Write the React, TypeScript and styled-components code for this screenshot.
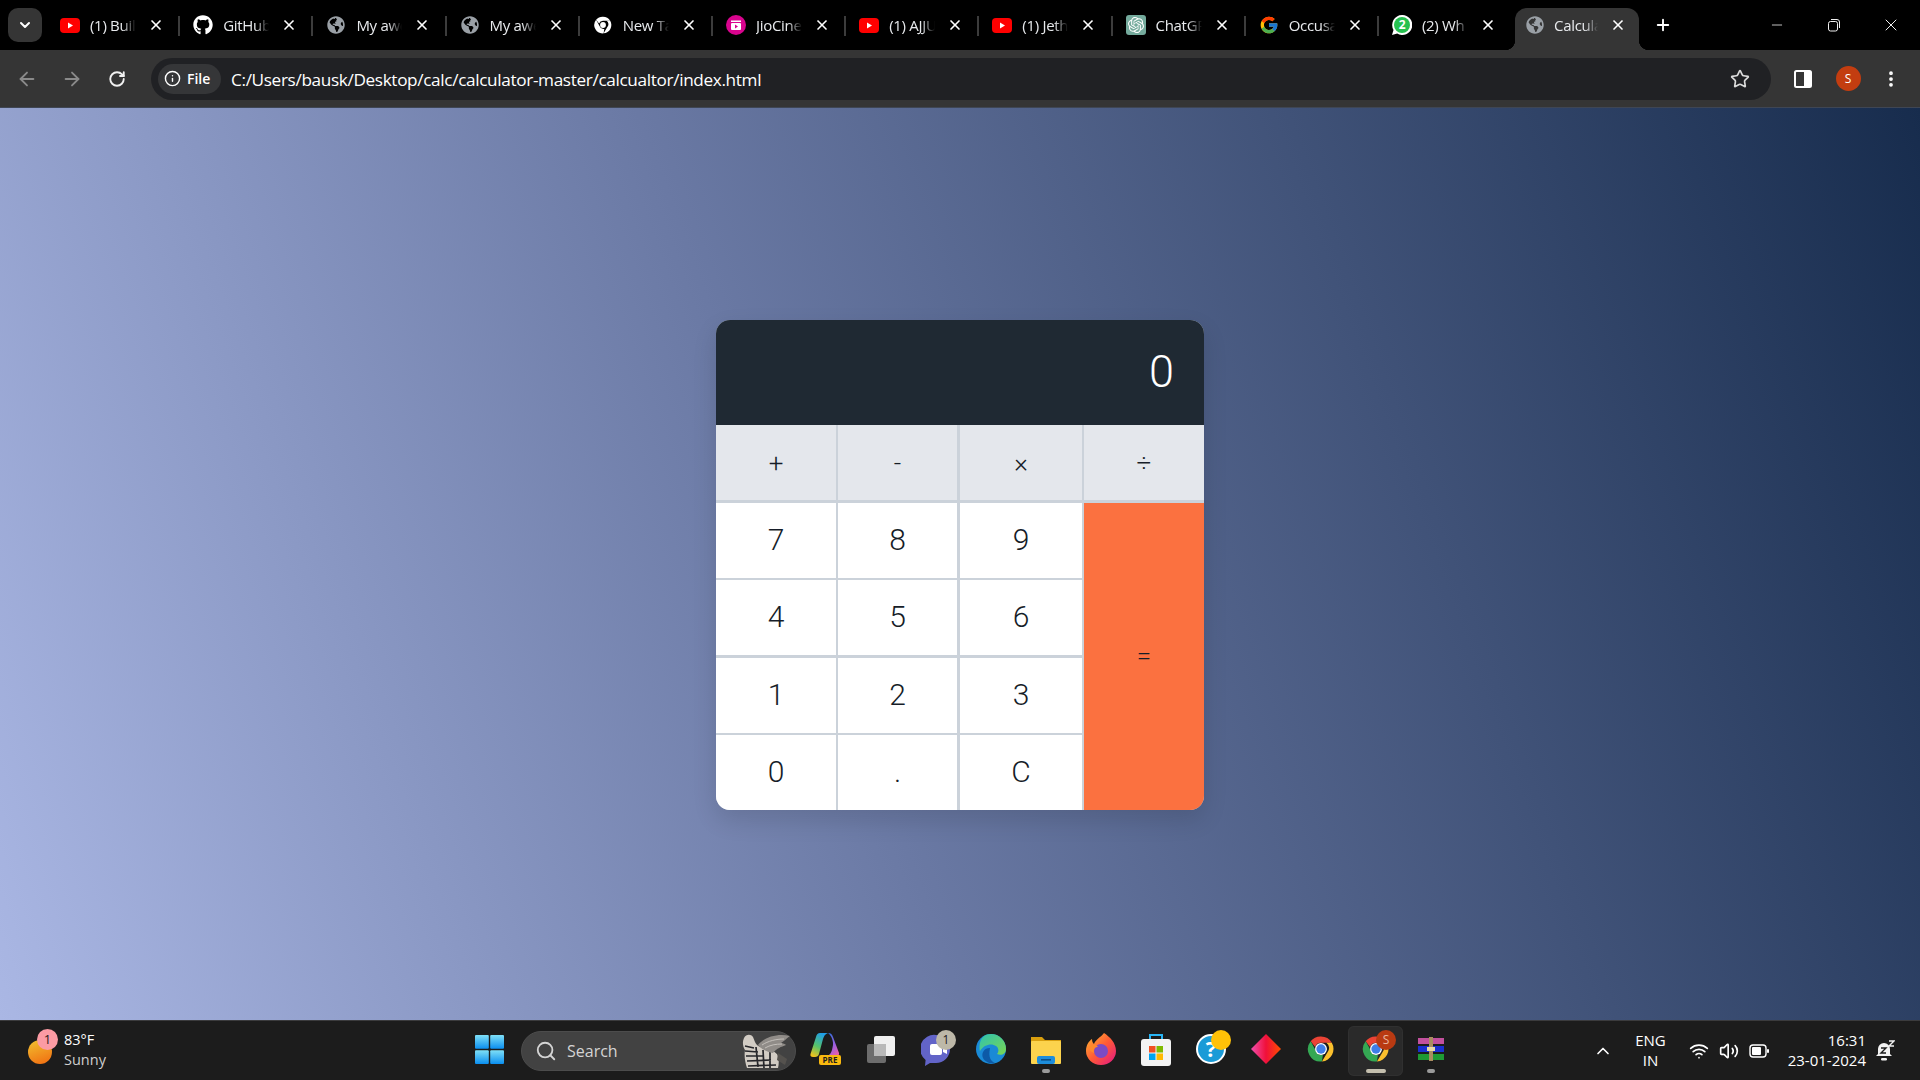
import React from "react";
import styled, { createGlobalStyle } from "styled-components";
import { ArrowLeft, ArrowRight, RotateCw, Info, Star, EllipsisVertical, Plus, X, Minus, ChevronDown, ChevronUp, Search, Wifi, Volume2 } from "lucide-react";
import { FaGithub, FaGlobeAmericas } from "react-icons/fa";
import { FcGoogle } from "react-icons/fc";
import { SiOpenai } from "react-icons/si";

const GlobalStyle = createGlobalStyle`
  html, body { margin: 0; padding: 0; height: 100%; }
  body { font-family: "Open Sans", "Liberation Sans", sans-serif; overflow: hidden; background: #000; }
  * { box-sizing: border-box; }
`;

const Screen = styled.div`
  width: 1920px;
  height: 1080px;
  display: flex;
  flex-direction: column;
`;

/* tab strip */
const TabStrip = styled.div`
  height: 50px;
  background: #000;
  display: flex;
  align-items: flex-end;
  padding-left: 8px;
`;

const TabMenu = styled.div`
  width: 34px;
  height: 34px;
  margin-bottom: 8px;
  margin-right: 5px;
  border-radius: 10px;
  background: #353535;
  color: #fff;
  display: flex;
  align-items: center;
  justify-content: center;
`;

const Tab = styled.div<{ $active?: boolean; $last?: boolean }>`
  position: relative;
  width: 133.2px;
  height: 42px;
  display: flex;
  align-items: center;
  padding: 0 0 8px 13px;
  color: #e8eaed;
  font-size: 15px;
  letter-spacing: -0.3px;
  border-radius: 12px 12px 0 0;
  background: ${({ $active }) => ($active ? "#353535" : "transparent")};
  ${({ $active }) => $active && "margin-left: 3px; width: 124px; padding-left: 10px;"}

  &::after {
    content: "";
    display: ${({ $last }) => ($last ? "none" : "block")};
    position: absolute;
    right: 0;
    top: 8px;
    width: 2px;
    height: 20px;
    background: #3c3c3c;
  }
`;

const TabFlare = styled.span<{ $side: "left" | "right" }>`
  position: absolute;
  bottom: 0;
  ${({ $side }) => $side}: -10px;
  width: 10px;
  height: 10px;
  background: radial-gradient(
    circle at ${({ $side }) => ($side === "left" ? "0 0" : "100% 0")},
    transparent 10px,
    #353535 10.5px
  );
`;

const TabIcon = styled.span`
  width: 20px;
  height: 20px;
  flex: none;
  display: flex;
  align-items: center;
  justify-content: center;
`;

const TabTitle = styled.span<{ $active?: boolean }>`
  width: ${({ $active }) => ($active ? "44px" : "46px")};
  margin-left: ${({ $active }) => ($active ? "9px" : "10px")};
  white-space: nowrap;
  overflow: hidden;
  -webkit-mask-image: linear-gradient(to right, #000 70%, transparent 100%);
  mask-image: linear-gradient(to right, #000 70%, transparent 100%);
`;

const TabClose = styled.span`
  margin-left: 12px;
  display: flex;
  color: #fff;
`;

const NewTab = styled.div`
  margin: 0 0 16px 15px;
  color: #fff;
  display: flex;
`;

const WindowControls = styled.div`
  margin-left: auto;
  align-self: center;
  display: flex;
  align-items: center;
  color: #f0f0f0;
  padding-right: 1px;
`;

const WindowButton = styled.div`
  width: 57px;
  height: 20px;
  display: flex;
  align-items: center;
  justify-content: center;
`;

/* toolbar */
const Toolbar = styled.div`
  height: 58px;
  background: #353535;
  display: flex;
  align-items: center;
  border-bottom: 1px solid #3f4654;
  padding-left: 15px;
`;

const NavButton = styled.div<{ $dim?: boolean }>`
  width: 24px;
  flex: none;
  margin-right: ${({ $dim }) => ($dim ? "21px" : "20px")};
  display: flex;
  justify-content: center;
  color: ${({ $dim }) => ($dim ? "#8a8a8a" : "#f1f1f1")};
`;

const Omnibox = styled.div`
  width: 1620px;
  height: 42px;
  margin-left: 2px;
  flex: none;
  background: #202124;
  border-radius: 21px;
  display: flex;
  align-items: center;
  padding: 0 21px 0 7px;
  color: #fff;
`;

const SiteChip = styled.div`
  width: 63px;
  height: 30px;
  border-radius: 15px;
  background: #353638;
  display: flex;
  align-items: center;
  gap: 6px;
  padding-left: 6px;
  font-size: 14px;
  font-weight: 600;
`;

const Url = styled.div`
  margin: 1px 0 0 10px;
  font-size: 17.2px;
  letter-spacing: -0.35px;
  white-space: nowrap;
`;

const ToolbarRight = styled.div`
  margin-left: auto;
  display: flex;
  color: #dcdcdc;
`;

const ToolSlot = styled.div<{ $w: number }>`
  width: ${({ $w }) => $w}px;
  flex: none;
  display: flex;
  justify-content: center;
  align-items: center;
  color: #fff;
`;

const Avatar = styled.div`
  width: 25px;
  height: 25px;
  border-radius: 50%;
  background: #c33d10;
  color: #fff;
  font-size: 12px;
  display: flex;
  align-items: center;
  justify-content: center;
`;

/* page */
const Page = styled.main`
  flex: 1;
  display: flex;
  align-items: center;
  justify-content: center;
  padding-top: 2px;
  background: linear-gradient(70deg, #aab7e4 0%, #6a79a4 43%, #172c4d 100%);
`;

const Calculator = styled.div`
  width: 488px;
  border-radius: 14px;
  overflow: hidden;
  background: #cbd2da;
  font-family: Roboto, "Liberation Sans", sans-serif;
  font-weight: 300;
  box-shadow: 0 10px 25px rgba(0, 0, 0, 0.12);
`;

const Display = styled.div`
  height: 105px;
  background: #1f2933;
  color: #fff;
  font-size: 45px;
  display: flex;
  align-items: center;
  justify-content: flex-end;
  padding: 0 30px 2px 0;
`;

const Keys = styled.div`
  display: grid;
  grid-template-columns: 122px 122px 124px 120px;
  grid-template-rows: 78px 77px 78px 77px 75px;
`;

const Key = styled.div<{ $variant: "op" | "num" | "eq"; $right: number; $bottom: number }>`
  display: flex;
  align-items: center;
  justify-content: center;
  padding-bottom: 2px;
  font-size: 30px;
  color: #161d28;
  background-clip: padding-box;
  background-color: ${({ $variant }) =>
    $variant === "op" ? "#e4e7ec" : $variant === "eq" ? "#fb7140" : "#fff"};
  border-right: ${({ $right }) => $right}px solid #cbd2da;
  border-bottom: ${({ $bottom }) => $bottom}px solid #cbd2da;
  ${({ $variant }) => $variant === "op" && "font-size: 26px; padding-bottom: 0;"}
  ${({ $variant }) => $variant === "eq" && "grid-column: 4; grid-row: 2 / span 4; font-size: 26px;"}
`;

/* taskbar */
const Taskbar = styled.div`
  height: 60px;
  background: #1c1c1c;
  border-top: 1px solid #3b3b3d;
  display: flex;
  align-items: center;
  color: #fff;
  font-family: "Open Sans", "Liberation Sans", sans-serif;
`;

const Weather = styled.div`
  width: 475px;
  padding-left: 28px;
  display: flex;
  align-items: center;
`;

const WeatherIcon = styled.div`
  position: relative;
  width: 24px;
  height: 24px;
  margin-top: 2px;
  border-radius: 50%;
  background: linear-gradient(160deg, #f2c230, #f06a10);
`;

const PinkBadge = styled.span`
  position: absolute;
  left: 9px;
  top: -11px;
  width: 21px;
  height: 21px;
  border-radius: 50%;
  background: #fc9ba4;
  color: #2b1a1a;
  font-size: 13px;
  display: flex;
  align-items: center;
  justify-content: center;
`;

const WeatherText = styled.div`
  margin-left: 12px;
  font-size: 14.5px;
  line-height: 20px;
  margin-top: -2px;
`;

const Muted = styled.div`
  color: #cfcfcf;
`;

const StartLogo = styled.div`
  width: 29px;
  height: 29px;
  flex: none;
  display: flex;
  margin-top: -2px;
`;

const SearchPill = styled.div`
  width: 275px;
  height: 40px;
  margin-left: 17px;
  border-radius: 20px;
  background: #424242;
  border: 1px solid #4c4c4c;
  display: flex;
  align-items: center;
  padding-left: 13px;
  color: #d4d4d4;
  font-size: 16px;
  gap: 10px;
  position: relative;
`;

const PillArt = styled.span`
  position: absolute;
  right: 3px;
  top: 1px;
  display: flex;
`;

const Apps = styled.div`
  margin-left: 2px;
  display: flex;
`;

const AppSlot = styled.div<{ $active?: boolean }>`
  position: relative;
  width: 55px;
  height: 50px;
  padding-bottom: 3px;
  display: flex;
  align-items: center;
  justify-content: center;
  border-radius: 6px;
  ${({ $active }) => $active && "background: #2a2a2a; box-shadow: inset 0 0 0 1px #303030;"}
`;

const AppDot = styled.span<{ $wide?: boolean }>`
  position: absolute;
  bottom: 3px;
  left: 50%;
  transform: translateX(-50%);
  width: ${({ $wide }) => ($wide ? "20px" : "8px")};
  height: 4px;
  border-radius: 2px;
  background: ${({ $wide }) => ($wide ? "#c4bfae" : "#9a9a9a")};
`;

const AppBadge = styled.span<{ $color: string; $dark?: boolean }>`
  position: absolute;
  right: 7px;
  top: 4px;
  width: 20px;
  height: 20px;
  border-radius: 50%;
  background: ${({ $color }) => $color};
  color: ${({ $dark }) => ($dark ? "#222" : "#e8b6a0")};
  font-size: 12px;
  display: flex;
  align-items: center;
  justify-content: center;
`;

const Tray = styled.div`
  margin-left: auto;
  display: flex;
  align-items: center;
  padding-right: 25px;
`;

const TrayChevron = styled.div`
  display: flex;
  margin-right: 22px;
`;

const Lang = styled.div`
  text-align: center;
  font-size: 15px;
  line-height: 20px;
  margin: -2px 18px 0 0;
`;

const TrayIcon = styled.div`
  width: 30px;
  display: flex;
  justify-content: center;
`;

const Clock = styled.div`
  margin: -2px 0 0 14px;
  text-align: right;
  font-size: 15px;
  line-height: 20px;
`;

const Bell = styled.div`
  margin-left: 9px;
  display: flex;
`;

const YouTube = () => (
  <svg width="20" height="15" viewBox="0 0 20 15">
    <rect width="20" height="15" rx="4" fill="#f00" />
    <path d="M8 4.5 13 7.5 8 10.5z" fill="#fff" />
  </svg>
);

const ChromeLogo = ({ size = 20 }: { size?: number }) => (
  <svg width={size} height={size} viewBox="0 0 48 48">
    <path d="M24 4a20 20 0 0 1 17.3 10H24a10 10 0 0 0-9.4 6.6L7.5 11.6A20 20 0 0 1 24 4z" fill="#ea4335" />
    <path d="M41.3 14A20 20 0 0 1 25.5 44l8.9-15a10 10 0 0 0-1.8-15z" fill="#fbc02d" />
    <path d="M7.5 11.6 16 27a10 10 0 0 0 11 6.6L25.5 44A20 20 0 0 1 7.5 11.6z" fill="#34a853" />
    <circle cx="24" cy="24" r="9.5" fill="#fff" />
    <circle cx="24" cy="24" r="7.5" fill="#3f7ee8" />
  </svg>
);

const MonoChrome = () => (
  <svg width="20" height="20" viewBox="0 0 48 48" fill="#fff">
    <path d="M24 4a20 20 0 0 1 17.3 10H24a10 10 0 0 0-9.4 6.6L7.5 11.6A20 20 0 0 1 24 4z" />
    <path d="M41.3 14A20 20 0 0 1 25.5 44l8.9-15a10 10 0 0 0-1.8-15z" />
    <path d="M7.5 11.6 16 27a10 10 0 0 0 11 6.6L25.5 44A20 20 0 0 1 7.5 11.6z" />
    <circle cx="24" cy="24" r="7" />
  </svg>
);

const JioCinema = () => (
  <svg width="20" height="20" viewBox="0 0 20 20">
    <circle cx="10" cy="10" r="10" fill="#d9048e" />
    <rect x="5" y="8" width="10" height="7" rx="1" fill="#fff" />
    <path d="M5 5.5h10v1.5H5z" fill="#fff" />
    <path d="M9 9.6 12 11.5 9 13.4z" fill="#d9048e" />
  </svg>
);

const ChatGptBox = styled.span`
  width: 20px;
  height: 20px;
  background: #74aa9c;
  border-radius: 3px;
  display: flex;
  align-items: center;
  justify-content: center;
  color: #fff;
`;

const ChatGpt = () => (
  <ChatGptBox>
    <SiOpenai size={16} />
  </ChatGptBox>
);

const WhatsApp = () => (
  <svg width="20" height="20" viewBox="0 0 20 20">
    <path d="M10 0a10 10 0 0 0-8.5 15L0 20l5.2-1.4A10 10 0 1 0 10 0z" fill="#fff" />
    <circle cx="10" cy="10" r="8" fill="#25c14f" />
    <text x="10" y="14" textAnchor="middle" fontSize="12" fontWeight="700" fill="#fff" fontFamily="Open Sans">2</text>
  </svg>
);

const Globe = () => <FaGlobeAmericas size={18} color="#9aa0a6" />;

const tabs: { icon: React.ReactNode; title: string }[] = [
  { icon: <YouTube />, title: "(1) Buil" },
  { icon: <FaGithub size={20} color="#fff" />, title: "GitHub" },
  { icon: <Globe />, title: "My awe" },
  { icon: <Globe />, title: "My awe" },
  { icon: <MonoChrome />, title: "New Ta" },
  { icon: <JioCinema />, title: "JioCine" },
  { icon: <YouTube />, title: "(1) AJJU" },
  { icon: <YouTube />, title: "(1) Jeth" },
  { icon: <ChatGpt />, title: "ChatGP" },
  { icon: <FcGoogle size={20} />, title: "Occusa" },
  { icon: <WhatsApp />, title: "(2) Wh" },
  { icon: <Globe />, title: "Calcula" },
];

const keys: { label: string; variant: "op" | "num" | "eq"; right: number; bottom: number }[] = [
  { label: "+", variant: "op", right: 2, bottom: 3 },
  { label: "-", variant: "op", right: 3, bottom: 3 },
  { label: "×", variant: "op", right: 2, bottom: 3 },
  { label: "÷", variant: "op", right: 0, bottom: 3 },
  { label: "7", variant: "num", right: 2, bottom: 2 },
  { label: "8", variant: "num", right: 3, bottom: 2 },
  { label: "9", variant: "num", right: 2, bottom: 2 },
  { label: "=", variant: "eq", right: 0, bottom: 0 },
  { label: "4", variant: "num", right: 2, bottom: 3 },
  { label: "5", variant: "num", right: 3, bottom: 3 },
  { label: "6", variant: "num", right: 2, bottom: 3 },
  { label: "1", variant: "num", right: 2, bottom: 2 },
  { label: "2", variant: "num", right: 3, bottom: 2 },
  { label: "3", variant: "num", right: 2, bottom: 2 },
  { label: "0", variant: "num", right: 2, bottom: 0 },
  { label: ".", variant: "num", right: 3, bottom: 0 },
  { label: "C", variant: "num", right: 2, bottom: 0 },
];

const Copilot = () => (
  <svg width="32" height="34" viewBox="0 0 32 34">
    <defs>
      <linearGradient id="cp" x1="0.6" y1="0" x2="0.2" y2="1">
        <stop offset="0" stopColor="#1f9ee8" />
        <stop offset=".55" stopColor="#56c26a" />
        <stop offset="1" stopColor="#f5c21a" />
      </linearGradient>
      <linearGradient id="cp2" x1="0.2" y1="0" x2="0.8" y2="1">
        <stop offset="0" stopColor="#2f6fe0" />
        <stop offset=".55" stopColor="#9a5fe0" />
        <stop offset="1" stopColor="#ee5fa8" />
      </linearGradient>
    </defs>
    <path d="M10 1h8c-3 1-4 3-5 6L9 22c-.5 2-2 3-4 3H3c-2 0-3-1-2.500-3L6 5c.6-2.500 2-4 4-4z" fill="url(#cp)" />
    <path d="M18 1c3 0 4 1.500 5 4l6 16c.6 2-1 3-3 3h-9c3-1 4-3 5-6l1-5c.5-3-1-9-5-12z" fill="url(#cp2)" />
    <rect x="9" y="23" width="22" height="10" rx="2" fill="#f9b90f" />
    <text x="20" y="31" textAnchor="middle" fontSize="8" fontWeight="700" fill="#1c1c1c" fontFamily="Open Sans">PRE</text>
  </svg>
);

const TaskView = () => (
  <svg width="30" height="30" viewBox="0 0 30 30">
    <rect x="1" y="10" width="19" height="19" rx="2" fill="#6d6d6d" />
    <rect x="8" y="2" width="21" height="20" rx="2" fill="#f0f0f0" />
    <rect x="8" y="10" width="12" height="12" fill="#b9b9b9" />
  </svg>
);

const Teams = () => (
  <svg width="30" height="34" viewBox="0 0 30 34">
    <path d="M15 3a14 14 0 0 1 0 28H9l-5 3 .6-6A14 14 0 0 1 15 3z" fill="#6264c8" />
    <rect x="9" y="12" width="12" height="11" rx="2" fill="#fff" />
    <path d="M22 15l4-2v9l-4-2z" fill="#fff" />
  </svg>
);

const Edge = () => (
  <svg width="30" height="32" viewBox="0 0 30 30">
    <defs>
      <linearGradient id="ed" x1="0" y1="0" x2="1" y2="1">
        <stop offset="0" stopColor="#2fc3b0" />
        <stop offset="1" stopColor="#7ad651" />
      </linearGradient>
    </defs>
    <circle cx="15" cy="15" r="15" fill="#1a8ad6" />
    <path d="M15 0a15 15 0 0 1 15 15c0 5-5 7-9 5 2-2 2-6-1-8-4-3-12-2-16 5-1-4-1-17 11-17z" fill="url(#ed)" />
    <path d="M14 14c-6 0-9 5-7 10 2 4 7 6 12 5-4-2-7-5-5-15z" fill="#0d5aa7" />
  </svg>
);

const Explorer = () => (
  <svg width="30" height="30" viewBox="0 0 30 30">
    <path d="M0 3h11l3 3h16v4H0z" fill="#d99f0e" />
    <rect y="7" width="30" height="23" rx="1" fill="#fcd34d" />
    <rect x="6" y="22" width="18" height="8" rx="2" fill="#1d8ddb" />
    <rect x="10" y="25" width="10" height="1.6" fill="#0c4f87" />
  </svg>
);

const Firefox = () => (
  <svg width="30" height="32" viewBox="0 0 30 32">
    <defs>
      <linearGradient id="ff" x1="0" y1="0" x2="1" y2="1">
        <stop offset="0" stopColor="#ffbd2e" />
        <stop offset=".5" stopColor="#ff5a36" />
        <stop offset="1" stopColor="#e31587" />
      </linearGradient>
    </defs>
    <path d="M18 0c6 4 12 10 12 18a15 14 0 0 1-30 0C0 12 3 8 6 6c0 3 1 4 2 5 2-5 6-6 10-11z" fill="url(#ff)" />
    <circle cx="15" cy="18" r="7" fill="#7b4bc4" />
    <path d="M3 14c3-3 7-3 9 0-3 0-5 2-4 6-3-1-5-3-5-6z" fill="#ff8a2b" />
  </svg>
);

const Store = () => (
  <svg width="30" height="34" viewBox="0 0 30 34">
    <path d="M9 8V3h12v5" fill="none" stroke="#29b6f6" strokeWidth="2" />
    <rect y="7" width="30" height="27" rx="3" fill="#f3f3f3" />
    <rect x="8" y="14" width="6.5" height="6.500" fill="#f25022" />
    <rect x="15.5" y="14" width="6.5" height="6.500" fill="#7fba00" />
    <rect x="8" y="21.5" width="6.5" height="6.500" fill="#00a4ef" />
    <rect x="15.5" y="21.5" width="6.5" height="6.500" fill="#ffb900" />
  </svg>
);

const Help = () => (
  <svg width="30" height="30" viewBox="0 0 30 30">
    <circle cx="15" cy="15" r="14" fill="#1a9bd7" stroke="#fff" strokeWidth="2" />
    <text x="15" y="23" textAnchor="middle" fontSize="22" fontWeight="700" fill="#fff" fontFamily="Open Sans">?</text>
  </svg>
);

const Diamond = () => (
  <svg width="30" height="30" viewBox="0 0 30 30">
    <defs>
      <linearGradient id="dm" x1="0" y1="0" x2="1" y2="0">
        <stop offset="0" stopColor="#f050b0" />
        <stop offset=".5" stopColor="#f0103a" />
        <stop offset="1" stopColor="#ff4d00" />
      </linearGradient>
    </defs>
    <path d="M15 0 30 15 15 30 0 15z" fill="url(#dm)" />
  </svg>
);

const WinRar = () => (
  <svg width="26" height="24" viewBox="0 0 26 24">
    <rect width="26" height="6" y="1" fill="#c2509d" />
    <rect width="26" height="6" y="9" fill="#1a2fd0" />
    <rect width="26" height="6" y="17" fill="#1e9a34" />
    <rect x="11" y="0" width="4" height="24" fill="#a98d60" />
    <rect x="9" y="10" width="8" height="4" fill="#e8d9a8" />
  </svg>
);

const StartGrid = () => (
  <svg width="29" height="29" viewBox="0 0 29 29">
    <defs>
      <linearGradient id="st" x1="0" y1="0" x2="0" y2="1">
        <stop offset="0" stopColor="#7fe0f7" />
        <stop offset="1" stopColor="#0a8ef0" />
      </linearGradient>
    </defs>
    <rect width="13.8" height="13.8" rx="1" fill="url(#st)" />
    <rect x="15.2" width="13.8" height="13.8" rx="1" fill="url(#st)" />
    <rect y="15.2" width="13.8" height="13.8" rx="1" fill="url(#st)" />
    <rect x="15.2" y="15.2" width="13.8" height="13.8" rx="1" fill="url(#st)" />
  </svg>
);

const ZebraArt = () => (
  <svg width="58" height="36" viewBox="0 0 58 36">
    <path d="M10 5c2-4 7-4 9-1l2 5c1 3 4 5 8 6 7 2 13 3 15 8 1 4 1 8 0 12H13c-2-6-3-12-2-18-2-3-3-8-1-12z" fill="#d2ccc4" />
    <path d="M11 13l9 2M11 18l13 1M12 23l17 0M13 28l24-1M14 33l28-1M22 14l2 20M29 17l1 18M36 19l0 16" stroke="#26262a" strokeWidth="1.700" fill="none" />
    <path d="M24 12c6-8 20-12 32-9-4 3-6 5-9 7 2 0 4 1 5 2-5 2-9 3-13 8-5-1-11-3-15-8z" fill="#908c88" />
    <path d="M28 12c6-4 14-6 22-6M31 15c5-3 11-4 17-4" stroke="#c4c0bb" strokeWidth="1" fill="none" />
    <path d="M44 20l9 6-2 6-8-5z" fill="#55524e" />
  </svg>
);

const Battery = () => (
  <svg width="20" height="14" viewBox="0 0 20 14">
    <rect x="1" y="1" width="16" height="12" rx="3" fill="none" stroke="#fff" strokeWidth="1.4" />
    <rect x="3" y="3" width="9" height="8" rx="1" fill="#fff" />
    <rect x="18" y="5" width="2" height="4" rx="1" fill="#fff" />
  </svg>
);

const SnoozeBell = () => (
  <svg width="20" height="22" viewBox="0 0 20 22">
    <path d="M9 3a6 6 0 0 1 6 6v5l2 2H1l2-2V9a6 6 0 0 1 6-6z" fill="#f2f2f2" />
    <rect x="6" y="18" width="6" height="2.5" rx="1.2" fill="#f2f2f2" />
    <path d="M6 8h5l-5 5h5" stroke="#1c1c1c" strokeWidth="1.4" fill="none" />
    <path d="M14 1h5l-5 5h5" stroke="#f2f2f2" strokeWidth="1.4" fill="none" />
  </svg>
);

const apps: { key: string; icon: React.ReactNode; dot?: boolean; extra?: React.ReactNode; active?: boolean }[] = [
  { key: "copilot", icon: <Copilot /> },
  { key: "taskview", icon: <TaskView /> },
  { key: "teams", icon: <Teams />, extra: <AppBadge $color="#bdb8a8" $dark>1</AppBadge> },
  { key: "edge", icon: <Edge /> },
  { key: "explorer", icon: <Explorer />, dot: true },
  { key: "firefox", icon: <Firefox /> },
  { key: "store", icon: <Store /> },
  { key: "help", icon: <Help />, extra: <AppBadge $color="#ffc107" /> },
  { key: "diamond", icon: <Diamond /> },
  { key: "chrome", icon: <ChromeLogo size={30} /> },
  { key: "chrome-s", icon: <ChromeLogo size={30} />, active: true, extra: <AppBadge $color="#b93a12">S</AppBadge> },
  { key: "winrar", icon: <WinRar />, dot: true },
];

export default function App() {
  return (
    <Screen>
      <GlobalStyle />
      <TabStrip>
        <TabMenu><ChevronDown size={16} strokeWidth={3} /></TabMenu>
        {tabs.map((tab, i) => (
          <Tab key={i} $active={i === 11} $last={i >= 10}>
            {i === 11 && <TabFlare $side="left" />}
            <TabIcon>{tab.icon}</TabIcon>
            <TabTitle $active={i === 11}>{tab.title}</TabTitle>
            <TabClose><X size={16} strokeWidth={2.5} /></TabClose>
            {i === 11 && <TabFlare $side="right" />}
          </Tab>
        ))}
        <NewTab><Plus size={18} strokeWidth={2.5} /></NewTab>
        <WindowControls>
          <WindowButton><Minus size={16} strokeWidth={1.2} /></WindowButton>
          <WindowButton>
            <svg width="14" height="14" viewBox="0 0 14 14" fill="none" stroke="currentColor">
              <rect x="1.5" y="3.5" width="9" height="9.5" rx="2" />
              <path d="M4 1.5h6a2.5 2.5 0 0 1 2.5 2.5v6" />
            </svg>
          </WindowButton>
          <WindowButton><X size={20} strokeWidth={1.2} /></WindowButton>
        </WindowControls>
      </TabStrip>

      <Toolbar>
        <NavButton $dim><ArrowLeft size={22} /></NavButton>
        <NavButton $dim><ArrowRight size={22} /></NavButton>
        <NavButton><RotateCw size={18} strokeWidth={2.5} /></NavButton>
        <Omnibox>
          <SiteChip><Info size={17} />File</SiteChip>
          <Url>C:/Users/bausk/Desktop/calc/calculator-master/calcualtor/index.html</Url>
          <ToolbarRight><Star size={20} /></ToolbarRight>
        </Omnibox>
        <ToolSlot $w={63}>
          <svg width="18" height="18" viewBox="0 0 18 18">
            <rect x="1" y="1" width="16" height="16" rx="1.5" fill="none" stroke="#fff" strokeWidth="2" />
            <rect x="10" y="1" width="7" height="16" fill="#fff" />
          </svg>
        </ToolSlot>
        <ToolSlot $w={28}><Avatar>S</Avatar></ToolSlot>
        <ToolSlot $w={58}><EllipsisVertical size={20} strokeWidth={2.5} /></ToolSlot>
      </Toolbar>

      <Page>
        <Calculator>
          <Display>0</Display>
          <Keys>
            {keys.map((k) => (
              <Key key={k.label} $variant={k.variant} $right={k.right} $bottom={k.bottom}>
                {k.label}
              </Key>
            ))}
          </Keys>
        </Calculator>
      </Page>

      <Taskbar>
        <Weather>
          <WeatherIcon><PinkBadge>1</PinkBadge></WeatherIcon>
          <WeatherText>
            <div>83°F</div>
            <Muted>Sunny</Muted>
          </WeatherText>
        </Weather>
        <StartLogo><StartGrid /></StartLogo>
        <SearchPill>
          <Search size={22} />
          Search
          <PillArt><ZebraArt /></PillArt>
        </SearchPill>
        <Apps>
          {apps.map((a) => (
            <AppSlot key={a.key} $active={a.active}>
              {a.icon}
              {a.extra}
              {a.dot && <AppDot />}
              {a.active && <AppDot $wide />}
            </AppSlot>
          ))}
        </Apps>
        <Tray>
          <TrayChevron><ChevronUp size={20} /></TrayChevron>
          <Lang>ENG<br />IN</Lang>
          <TrayIcon><Wifi size={20} /></TrayIcon>
          <TrayIcon><Volume2 size={20} /></TrayIcon>
          <TrayIcon><Battery /></TrayIcon>
          <Clock>16:31<br />23-01-2024</Clock>
          <Bell><SnoozeBell /></Bell>
        </Tray>
      </Taskbar>
    </Screen>
  );
}
